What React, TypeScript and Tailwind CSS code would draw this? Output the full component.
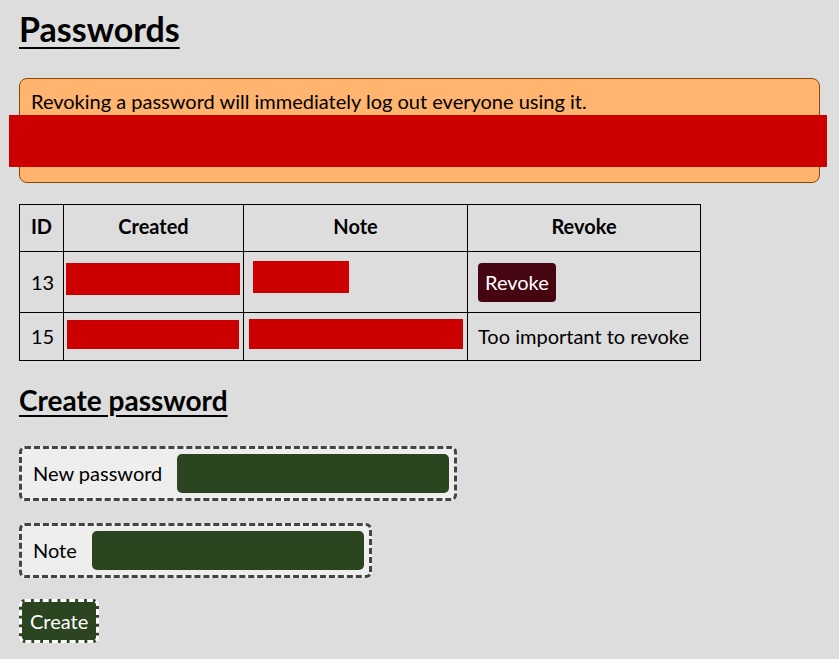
import { useState } from "react";

type Row = {
  id: number;
  created: { w: number; h: number; pt: string; ml: string };
  note: { w: number; h: number; pt: string; ml: string };
  revokable: boolean;
};

const rows: Row[] = [
  {
    id: 13,
    created: { w: 174, h: 32, pt: "pt-[11px]", ml: "ml-0" },
    note: { w: 96, h: 32, pt: "pt-[9px]", ml: "ml-[4px]" },
    revokable: true,
  },
  {
    id: 15,
    created: { w: 172, h: 29, pt: "pt-[7px]", ml: "ml-[1px]" },
    note: { w: 214, h: 30, pt: "pt-[6px]", ml: "ml-0" },
    revokable: false,
  },
];

const Redacted = ({ w, h, className = "" }: { w: number; h: number; className?: string }) => (
  <div className={`bg-[#cc0000] ${className}`} style={{ width: w, height: h }} />
);

const Field = ({ label, type = "text" }: { label: string; type?: string }) => {
  const [value, setValue] = useState("");
  return (
    <label className="flex w-fit items-center gap-[15px] rounded-[6px] border-[3px] border-dashed border-[#444444] bg-[#eeeeee] py-[5px] pl-[11px] pr-[5px]">
      <span>{label}</span>
      <input
        type={type}
        value={value}
        onChange={(e) => setValue(e.target.value)}
        className="h-[39px] w-[272px] rounded-[5px] bg-[#2a4520] px-2 text-white outline-none"
      />
    </label>
  );
};

export default function App() {
  return (
    <div className="min-h-screen bg-[#dddddd] px-[19px] pt-[8px] pb-6 text-[20px] leading-[27px] text-black [font-family:Lato,'Noto_Sans',sans-serif]">
      <h1 className="text-[34px] leading-[42px] font-bold underline decoration-2 underline-offset-[5px]">
        Passwords
      </h1>

      <div className="mt-[28px] rounded-[8px] border border-[#8c4a00] bg-[#ffb470] px-[11px] pt-[9px] pb-[15px]">
        <p>Revoking a password will immediately log out everyone using it.</p>
        <Redacted w={818} h={52} className="-ml-[22px]" />
      </div>

      <table className="mt-[21px] w-[681px] table-fixed border-collapse">
        <colgroup>
          <col className="w-[44px]" />
          <col className="w-[180px]" />
          <col className="w-[224px]" />
          <col className="w-[233px]" />
        </colgroup>
        <thead>
          <tr>
            {["ID", "Created", "Note", "Revoke"].map((h) => (
              <th key={h} className="h-[47px] border border-black px-[8px] pb-[3px] text-center font-bold">
                {h}
              </th>
            ))}
          </tr>
        </thead>
        <tbody>
          {rows.map((r) => (
            <tr key={r.id} className={r.revokable ? "h-[61px]" : "h-[48px]"}>
              <td className="border border-black px-[11px] align-middle">{r.id}</td>
              <td className={`border border-black px-[2px] align-top ${r.created.pt}`}>
                <Redacted w={r.created.w} h={r.created.h} className={r.created.ml} />
              </td>
              <td className={`border border-black px-[5px] align-top ${r.note.pt}`}>
                <Redacted w={r.note.w} h={r.note.h} className={r.note.ml} />
              </td>
              <td className="border border-black px-[10px] align-middle whitespace-nowrap">
                {r.revokable ? (
                  <button className="h-[39px] rounded-[4px] bg-[#450612] px-[7px] text-white">Revoke</button>
                ) : (
                  "Too important to revoke"
                )}
              </td>
            </tr>
          ))}
        </tbody>
      </table>

      <h2 className="mt-[21px] text-[28px] leading-[36px] font-bold underline decoration-2 underline-offset-[4px]">
        Create password
      </h2>

      <form className="mt-[28px] flex flex-col gap-[22px]" onSubmit={(e) => e.preventDefault()}>
        <Field label="New password" type="password" />
        <Field label="Note" />
        <button className="-mt-[1px] h-[44px] w-fit rounded-[6px] border-[3px] border-dashed border-white bg-[#2a4520] px-[8px] text-white">
          Create
        </button>
      </form>
    </div>
  );
}
